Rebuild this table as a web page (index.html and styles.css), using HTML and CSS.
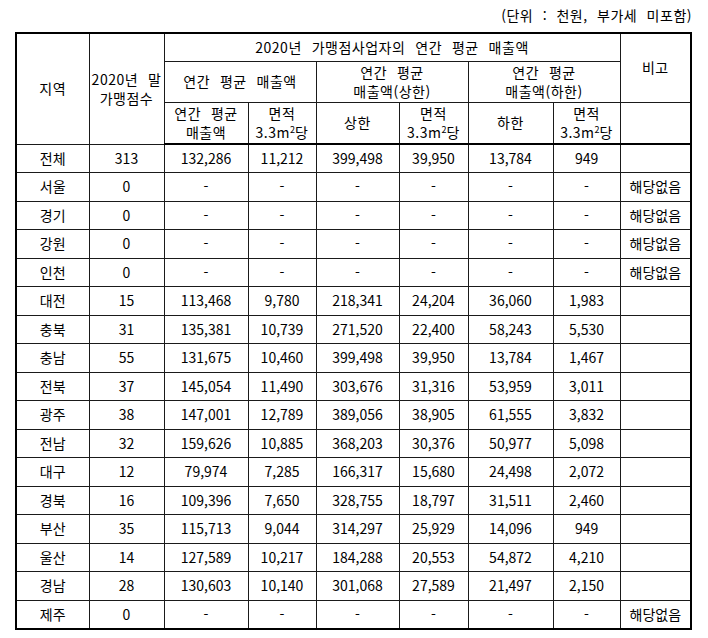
FILE: index.html
```html
<!DOCTYPE html>
<html lang="ko">
<head>
<meta charset="utf-8">
<link rel="stylesheet" href="styles.css">
</head>
<body>
<div class="unit">(단위 : 천원, 부가세 미포함)</div>
<table class="sales">
<colgroup>
<col class="c1"><col class="c2"><col class="c3"><col class="c4"><col class="c5"><col class="c6"><col class="c7"><col class="c8"><col class="c9">
</colgroup>
<thead>
<tr class="h1">
<th rowspan="3">지역</th>
<th rowspan="3">2020년 말<br>가맹점수</th>
<th colspan="6">2020년 가맹점사업자의 연간 평균 매출액</th>
<th rowspan="2">비고</th>
</tr>
<tr class="h2">
<th colspan="2">연간 평균 매출액</th>
<th colspan="2">연간 평균<br>매출액(상한)</th>
<th colspan="2">연간 평균<br>매출액(하한)</th>
</tr>
<tr class="h3">
<th>연간 평균<br>매출액</th>
<th>면적<br>3.3m<sup>2</sup>당</th>
<th>상한</th>
<th>면적<br>3.3m<sup>2</sup>당</th>
<th>하한</th>
<th>면적<br>3.3m<sup>2</sup>당</th>
<th></th>
</tr>
</thead>
<tbody>
<tr><td>전체</td><td>313</td><td>132,286</td><td>11,212</td><td>399,498</td><td>39,950</td><td>13,784</td><td>949</td><td></td></tr>
<tr><td>서울</td><td>0</td><td>-</td><td>-</td><td>-</td><td>-</td><td>-</td><td>-</td><td>해당없음</td></tr>
<tr><td>경기</td><td>0</td><td>-</td><td>-</td><td>-</td><td>-</td><td>-</td><td>-</td><td>해당없음</td></tr>
<tr><td>강원</td><td>0</td><td>-</td><td>-</td><td>-</td><td>-</td><td>-</td><td>-</td><td>해당없음</td></tr>
<tr><td>인천</td><td>0</td><td>-</td><td>-</td><td>-</td><td>-</td><td>-</td><td>-</td><td>해당없음</td></tr>
<tr><td>대전</td><td>15</td><td>113,468</td><td>9,780</td><td>218,341</td><td>24,204</td><td>36,060</td><td>1,983</td><td></td></tr>
<tr><td>충북</td><td>31</td><td>135,381</td><td>10,739</td><td>271,520</td><td>22,400</td><td>58,243</td><td>5,530</td><td></td></tr>
<tr><td>충남</td><td>55</td><td>131,675</td><td>10,460</td><td>399,498</td><td>39,950</td><td>13,784</td><td>1,467</td><td></td></tr>
<tr><td>전북</td><td>37</td><td>145,054</td><td>11,490</td><td>303,676</td><td>31,316</td><td>53,959</td><td>3,011</td><td></td></tr>
<tr><td>광주</td><td>38</td><td>147,001</td><td>12,789</td><td>389,056</td><td>38,905</td><td>61,555</td><td>3,832</td><td></td></tr>
<tr><td>전남</td><td>32</td><td>159,626</td><td>10,885</td><td>368,203</td><td>30,376</td><td>50,977</td><td>5,098</td><td></td></tr>
<tr><td>대구</td><td>12</td><td>79,974</td><td>7,285</td><td>166,317</td><td>15,680</td><td>24,498</td><td>2,072</td><td></td></tr>
<tr><td>경북</td><td>16</td><td>109,396</td><td>7,650</td><td>328,755</td><td>18,797</td><td>31,511</td><td>2,460</td><td></td></tr>
<tr><td>부산</td><td>35</td><td>115,713</td><td>9,044</td><td>314,297</td><td>25,929</td><td>14,096</td><td>949</td><td></td></tr>
<tr><td>울산</td><td>14</td><td>127,589</td><td>10,217</td><td>184,288</td><td>20,553</td><td>54,872</td><td>4,210</td><td></td></tr>
<tr><td>경남</td><td>28</td><td>130,603</td><td>10,140</td><td>301,068</td><td>27,589</td><td>21,497</td><td>2,150</td><td></td></tr>
<tr><td>제주</td><td>0</td><td>-</td><td>-</td><td>-</td><td>-</td><td>-</td><td>-</td><td>해당없음</td></tr>
</tbody>
</table>
</body>
</html>
```
FILE: styles.css
```css
html, body {
  margin: 0;
  padding: 0;
  background: #fff;
}
body {
  font-family: "Noto Sans CJK KR", "Noto Sans", sans-serif;
  font-size: 14px;
  color: #000;
}
.unit {
  width: 692px;
  height: 32px;
  line-height: 30px;
  text-align: right;
  letter-spacing: 0.5px;
  word-spacing: 5px;
}
.sales {
  margin-left: 15px;
  width: 675px;
  table-layout: fixed;
  border-collapse: collapse;
  border: 2px solid #000;
}
.c1 { width: 73px; }
.c2 { width: 75px; }
.c3 { width: 84px; }
.c4 { width: 68px; }
.c5 { width: 83px; }
.c6 { width: 69px; }
.c7 { width: 85px; }
.c8 { width: 67px; }
.c9 { width: 71px; }
.sales th, .sales td {
  border: 1px solid #1a1a1a;
  padding: 0;
  text-align: center;
  vertical-align: middle;
  font-weight: normal;
  line-height: 19px;
  white-space: nowrap;
}
.sales th {
  letter-spacing: 0.5px;
  word-spacing: 5.5px;
}
.sales thead tr:last-child th {
  border-bottom: 2px solid #000;
}
.h1 { height: 28px; }
.h2 { height: 41px; }
.h3 { height: 42px; }
.sales tbody tr { height: 28.5px; }
.sales sup {
  font-size: 9px;
  line-height: 0;
  letter-spacing: 0;
  vertical-align: 5px;
}
```
